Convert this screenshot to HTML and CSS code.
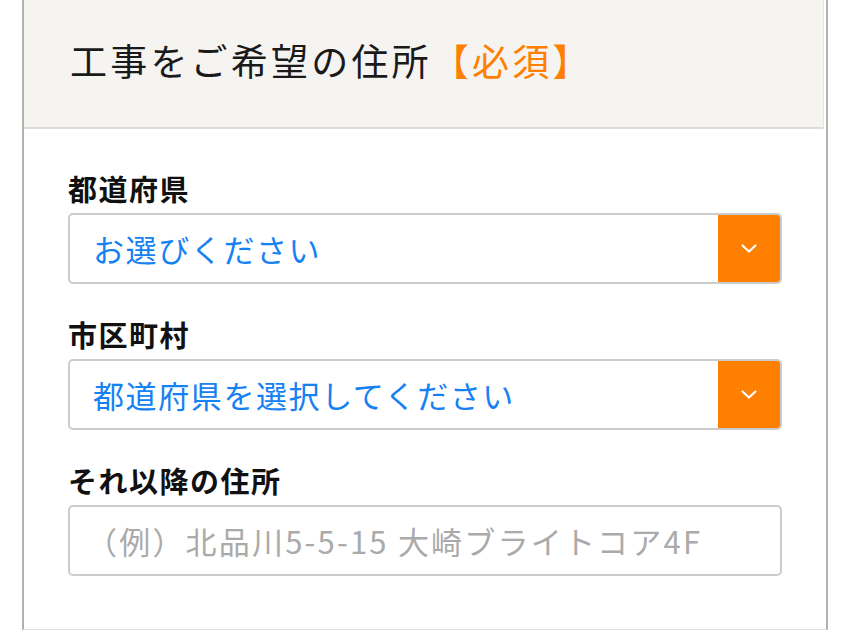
FILE: index.html
```html
<!DOCTYPE html>
<html lang="ja">
<head>
<meta charset="utf-8">
<title>工事をご希望の住所</title>
<link rel="stylesheet" href="styles.css">
</head>
<body>
<div class="panel">
  <div class="panel-head">
    <h2 class="panel-title">工事をご希望の住所<span class="req">【必須】</span></h2>
  </div>
  <div class="panel-body">
    <div class="field">
      <div class="label">都道府県</div>
      <div class="select">
        <span class="select-text">お選びください</span>
        <span class="select-btn"><svg width="18" height="11" viewBox="0 0 18 11"><path d="M2.5 2.5 L9 8.5 L15.5 2.5" fill="none" stroke="#fff" stroke-width="2.2" stroke-linecap="round" stroke-linejoin="round"/></svg></span>
      </div>
    </div>
    <div class="field">
      <div class="label">市区町村</div>
      <div class="select">
        <span class="select-text">都道府県を選択してください</span>
        <span class="select-btn"><svg width="18" height="11" viewBox="0 0 18 11"><path d="M2.5 2.5 L9 8.5 L15.5 2.5" fill="none" stroke="#fff" stroke-width="2.2" stroke-linecap="round" stroke-linejoin="round"/></svg></span>
      </div>
    </div>
    <div class="field last">
      <div class="label">それ以降の住所</div>
      <div class="input"><span class="placeholder">（例）北品川5-5-15 大崎ブライトコア4F</span></div>
    </div>
  </div>
</div>
</body>
</html>
```

FILE: styles.css
```css
html, body {
  margin: 0;
  padding: 0;
  background: #ffffff;
}
body {
  font-family: "Noto Sans CJK JP", "Noto Sans", sans-serif;
  height: 630px;
  overflow: hidden;
}
.panel {
  margin-left: 22px;
  width: 802px;
  height: 629px;
  border-left: 2px solid #b2b2b2;
  border-right: 2px solid #b2b2b2;
  border-bottom: 1px solid #dddddd;
  display: flex;
  flex-direction: column;
}
.panel-head {
  height: 127px;
  background: #f5f4f1;
  border-bottom: 2px solid #dcdcdc;
  border-right: 1px solid #e4e4e4;
  margin-right: 2px;
  display: flex;
  align-items: center;
  padding-left: 46px;
}
.panel-title {
  margin: 0 0 6px 0;
  font-weight: 400;
  font-size: 37px;
  letter-spacing: 3.2px;
  color: #1a1a1a;
  line-height: 1;
}
.req {
  color: #ff7f00;
}
.panel-body {
  padding: 39px 44px 0 44px;
}
.field {
  margin-bottom: 30px;
}
.label {
  font-size: 29px;
  font-weight: 700;
  line-height: 40px;
  letter-spacing: 1.5px;
  color: #111111;
  margin-bottom: 5px;
}
.select, .input {
  height: 67px;
  border: 2px solid #cccccc;
  border-radius: 5px;
  display: flex;
  align-items: stretch;
  overflow: hidden;
  background: #fff;
}
.select-text {
  flex: 1;
  display: flex;
  align-items: center;
  padding-left: 23px;
  font-size: 31px;
  letter-spacing: 1.6px;
  color: #1681f2;
}
.select-btn {
  width: 62px;
  background: #ff7f00;
  display: flex;
  align-items: center;
  justify-content: center;
}
.input {
  align-items: center;
}
.placeholder {
  padding-left: 16px;
  font-size: 31px;
  letter-spacing: 2.2px;
  color: #aaaaaa;
}
```
